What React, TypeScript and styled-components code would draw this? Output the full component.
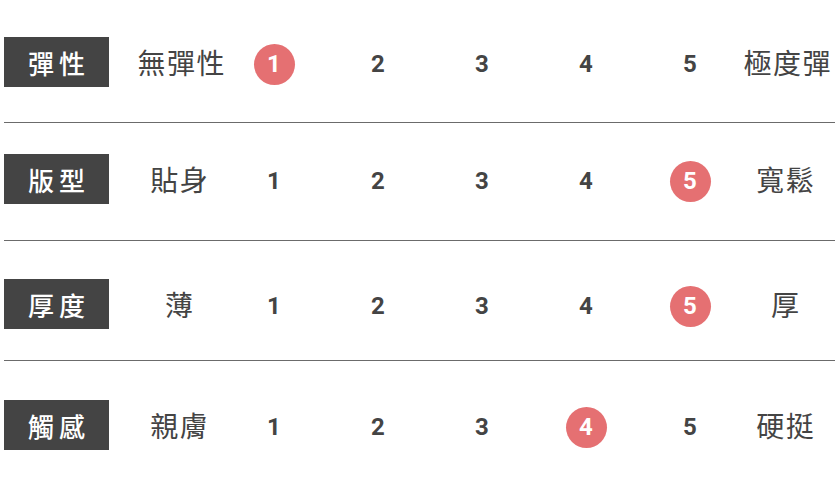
import React from "react";
import styled, { createGlobalStyle } from "styled-components";

const GlobalStyle = createGlobalStyle`
  html, body { margin: 0; padding: 0; background: #ffffff; }
  body { font-family: "Noto Sans CJK TC", "Noto Sans", sans-serif; }
`;

const Page = styled.div`
  width: 840px;
  height: 489px;
  padding-left: 4px;
  box-sizing: border-box;
  background: #fff;
`;

const Row = styled.div<{ $top: number; $bottom: number; $line: boolean }>`
  width: 831px;
  display: grid;
  grid-template-columns: 105px 27px 86px repeat(5, 104px) 86px;
  align-items: center;
  padding-top: ${(p) => p.$top}px;
  padding-bottom: ${(p) => p.$bottom}px;
  border-bottom: ${(p) => (p.$line ? "1px solid #6b6b6b" : "none")};
`;

const Label = styled.div`
  grid-column: 1;
  height: 50px;
  background: #444444;
  color: #ffffff;
  display: flex;
  align-items: center;
  justify-content: center;
  font-family: "Noto Sans CJK TC", sans-serif;
  font-weight: 500;
  font-size: 26px;
  letter-spacing: 5px;
  text-indent: 5px;
`;

const Word = styled.div<{ $col: number }>`
  grid-column: ${(p) => p.$col};
  text-align: center;
  color: #444444;
  font-family: "Noto Sans CJK TC", sans-serif;
  font-size: 28px;
  letter-spacing: 1.5px;
  text-indent: 1.5px;
  line-height: 1;
  white-space: nowrap;
`;

const Cell = styled.div`
  display: flex;
  justify-content: center;
  align-items: center;
  padding-top: 4px;
`;

const Num = styled.span<{ $active: boolean }>`
  width: 41px;
  height: 41px;
  border-radius: 50%;
  display: flex;
  align-items: center;
  justify-content: center;
  background: ${(p) => (p.$active ? "#e57072" : "transparent")};
  color: ${(p) => (p.$active ? "#ffffff" : "#444444")};
  font-family: "Roboto", "Open Sans", sans-serif;
  font-weight: 700;
  font-size: 24px;
`;

type RowData = {
  label: string;
  left: string;
  right: string;
  value: number;
  top: number;
  bottom: number;
};

const rows: RowData[] = [
  { label: "彈性", left: "無彈性", right: "極度彈", value: 1, top: 37, bottom: 35 },
  { label: "版型", left: "貼身", right: "寬鬆", value: 5, top: 31, bottom: 36 },
  { label: "厚度", left: "薄", right: "厚", value: 5, top: 38, bottom: 31 },
  { label: "觸感", left: "親膚", right: "硬挺", value: 4, top: 39, bottom: 30 },
];

export default function App() {
  return (
    <>
      <GlobalStyle />
      <Page>
        {rows.map((r, i) => (
          <Row key={r.label} $top={r.top} $bottom={r.bottom} $line={i < rows.length - 1}>
            <Label>{r.label}</Label>
            <Word $col={3}>{r.left}</Word>
            {[1, 2, 3, 4, 5].map((n) => (
              <Cell key={n}>
                <Num $active={n === r.value}>{n}</Num>
              </Cell>
            ))}
            <Word $col={9}>{r.right}</Word>
          </Row>
        ))}
      </Page>
    </>
  );
}
